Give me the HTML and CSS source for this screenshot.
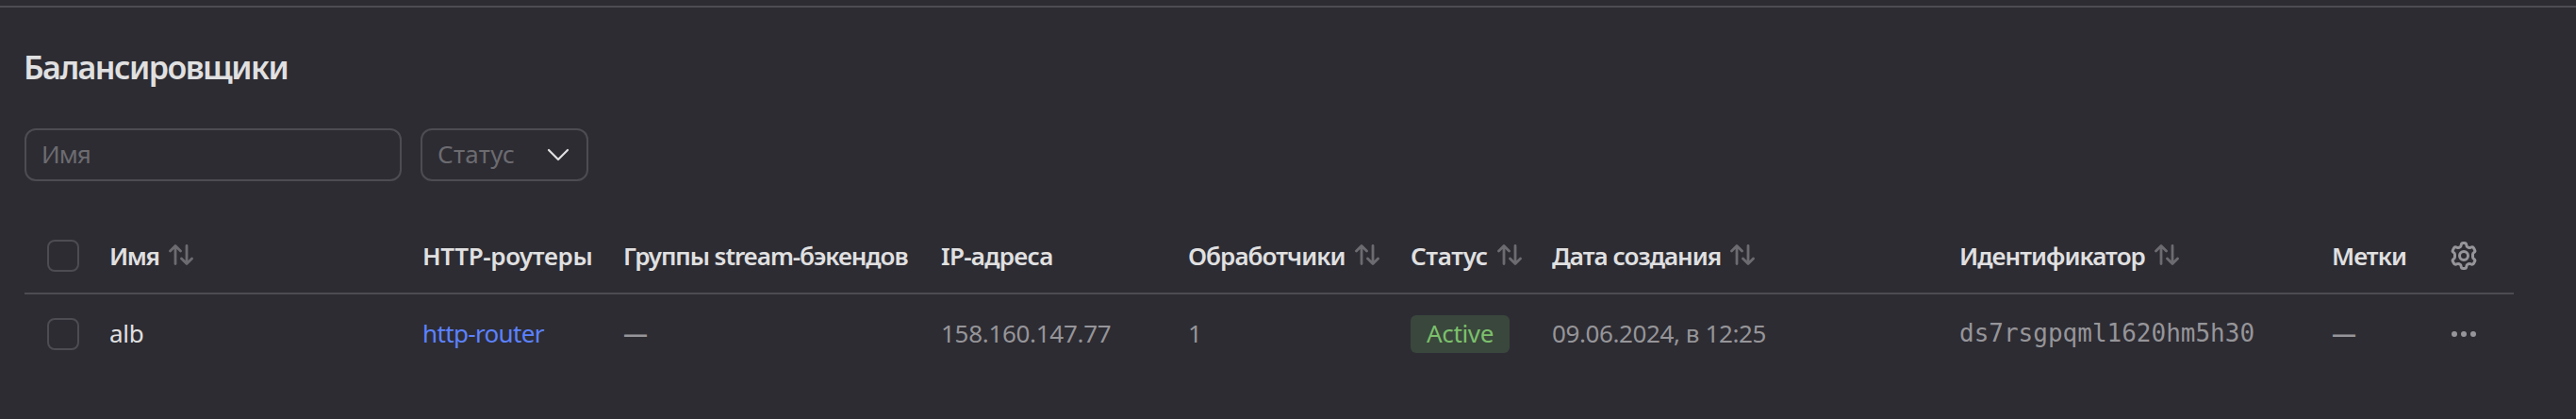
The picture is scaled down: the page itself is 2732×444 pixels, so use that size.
FILE: index.html
```html
<!DOCTYPE html>
<html lang="ru">
<head>
<meta charset="utf-8">
<title>Балансировщики</title>
<link rel="stylesheet" href="styles.css">
</head>
<body>
<svg class="defs" width="0" height="0" aria-hidden="true">
  <symbol id="sort" viewBox="0 0 26 22">
    <path d="M1.500 7 7 1.500 12.500 7M7 2v18.500M13.500 15 19 20.500 24.500 15M19 20V1.500" fill="none" stroke="currentColor" stroke-width="2.800" stroke-linecap="round" stroke-linejoin="round"/>
  </symbol>
</svg>
<main class="page">
  <h1 class="title">Балансировщики</h1>
  <div class="filters">
    <div class="control search"><span class="t-name">Имя</span></div>
    <div class="control select"><span class="t-status">Статус</span>
      <svg class="chevron" width="24" height="14" viewBox="0 0 24 14"><path d="M2 2l10 10L22 2" fill="none" stroke="currentColor" stroke-width="2.200" stroke-linecap="round" stroke-linejoin="round"/></svg>
    </div>
  </div>
  <div class="table">
    <div class="row head">
      <div class="check-cell"><span class="checkbox"></span></div>
      <div class="cell"><span class="h-name">Имя</span><svg class="sort"><use href="#sort"/></svg></div>
      <div class="cell"><span class="h-http">HTTP-роутеры</span></div>
      <div class="cell"><span class="h-groups">Группы stream-бэкендов</span></div>
      <div class="cell"><span class="h-ip">IP-адреса</span></div>
      <div class="cell"><span class="h-handlers">Обработчики</span><svg class="sort"><use href="#sort"/></svg></div>
      <div class="cell"><span class="h-status">Статус</span><svg class="sort"><use href="#sort"/></svg></div>
      <div class="cell"><span class="h-date">Дата создания</span><svg class="sort"><use href="#sort"/></svg></div>
      <div class="cell"><span class="h-id">Идентификатор</span><svg class="sort"><use href="#sort"/></svg></div>
      <div class="cell"><span class="h-labels">Метки</span></div>
      <div class="cell">
        <svg class="gear" width="30" height="32" viewBox="0 0 30 32" fill="none" stroke="currentColor" stroke-width="3" stroke-linejoin="round">
          <circle cx="15" cy="16" r="4.500"/>
          <path d="M11.200 6.700Q12 6.200 12.200 4.600Q12.400 2.400 14.200 2.400H15.800Q17.600 2.400 17.800 4.600Q18 6.200 18.800 6.700Q20.400 8 22 7.300Q24.300 6.200 25.300 7.600L26.500 9.700Q27.500 11.400 25.800 12.500Q24.500 13.300 24.500 14.400V17.600Q24.500 18.700 25.800 19.500Q27.500 20.600 26.500 22.300L25.300 24.400Q24.300 25.800 22 24.700Q20.400 24 18.800 25.300Q18 25.800 17.800 27.400Q17.600 29.600 15.800 29.600H14.200Q12.400 29.600 12.200 27.400Q12 25.800 11.200 25.300Q9.600 24 8 24.700Q5.700 25.800 4.700 24.400L3.500 22.300Q2.500 20.600 4.200 19.500Q5.500 18.700 5.500 17.600V14.400Q5.500 13.300 4.200 12.500Q2.500 11.400 3.500 9.700L4.700 7.600Q5.700 6.200 8 7.300Q9.600 8 11.200 6.700Z"/>
        </svg>
      </div>
    </div>
    <div class="row body">
      <div class="check-cell"><span class="checkbox"></span></div>
      <div class="cell primary"><span class="b-name">alb</span></div>
      <div class="cell"><a class="link">http-router</a></div>
      <div class="cell"><span class="dash">—</span></div>
      <div class="cell"><span class="b-ip">158.160.147.77</span></div>
      <div class="cell"><span>1</span></div>
      <div class="cell"><span class="badge">Active</span></div>
      <div class="cell"><span class="b-date">09.06.2024, в 12:25</span></div>
      <div class="cell"><span class="mono">ds7rsgpqml1620hm5h30</span></div>
      <div class="cell"><span class="dash">—</span></div>
      <div class="cell">
        <svg class="dots" width="30" height="8" viewBox="0 0 30 8" fill="currentColor"><circle cx="5" cy="4" r="3"/><circle cx="15" cy="4" r="3"/><circle cx="25" cy="4" r="3"/></svg>
      </div>
    </div>
  </div>
</main>
</body>
</html>
```
FILE: styles.css
```css
* { box-sizing: border-box; }
body {
  margin: 0;
  padding-top: 6px;
  height: 444px;
  overflow: hidden;
  background: #2d2c33;
  color: #e0e0e1;
  font: 450 26px/36px "Noto Sans", "Open Sans", sans-serif;
}
.defs { display: block; }
.page { border-top: 2px solid #4d4c52; padding: 41px 66px 0 26px; }
.title {
  margin: 0 0 43px -1px;
  font-size: 34px;
  line-height: 44px;
  font-weight: 650;
  letter-spacing: -1.5px;
}
.filters { display: flex; gap: 20px; }
.control {
  display: flex;
  align-items: center;
  height: 56px;
  border: 2px solid #4d4c52;
  border-radius: 12px;
  padding: 0 16px;
  color: #6c6b70;
}
.control span { padding-bottom: 2px; }
.search { width: 400px; }
.select { width: 178px; justify-content: space-between; padding-right: 18px; }
.chevron { color: #e0e0e1; }
.t-name { letter-spacing: -.9px; }
.t-status { letter-spacing: .3px; }

.table { margin-top: 38px; }
.row {
  display: grid;
  grid-template-columns: 90px 332px 213px 337px 262px 236px 150px 432px 395px 125px 66px;
  align-items: center;
}
.row { width: 2640px; }
.head { height: 82px; padding-top: 2px; border-bottom: 2px solid #4d4c52; font-weight: 650; }
.body { height: 84px; color: #969599; }
.body .cell > span, .body .cell > a { margin-bottom: 2px; }
.check-cell { padding-left: 24px; }
.checkbox { display: block; width: 34px; height: 34px; border: 2px solid #4d4c52; border-radius: 8px; }
.cell { display: flex; align-items: center; white-space: nowrap; }
.sort { width: 26px; height: 22px; margin-left: 10px; margin-top: -2px; color: #6c6b70; }
.h-name { letter-spacing: -1.4px; }
.h-http { letter-spacing: -.35px; }
.h-groups { letter-spacing: -1.05px; }
.h-ip { letter-spacing: -.7px; }
.h-status { letter-spacing: -.35px; }
.h-handlers, .h-date, .h-id, .h-labels { letter-spacing: -.95px; }
.gear, .dots { color: #969599; }
.primary { color: #e0e0e1; }
.b-name { letter-spacing: -.3px; }
.link { color: #5c82ff; letter-spacing: -.65px; }
.b-ip { letter-spacing: -.3px; }
.b-date { letter-spacing: -.4px; }
.dash { font-weight: 600; letter-spacing: 0; }
.body .cell .badge {
  height: 40px;
  width: 105px;
  margin-bottom: 0;
  line-height: 38px;
  text-align: center;
  border-radius: 6px;
  background: #3a473c;
  color: #7cc06c;
  letter-spacing: -.35px;
}
.mono { font-family: "DejaVu Sans Mono", "Liberation Mono", monospace; }
```
